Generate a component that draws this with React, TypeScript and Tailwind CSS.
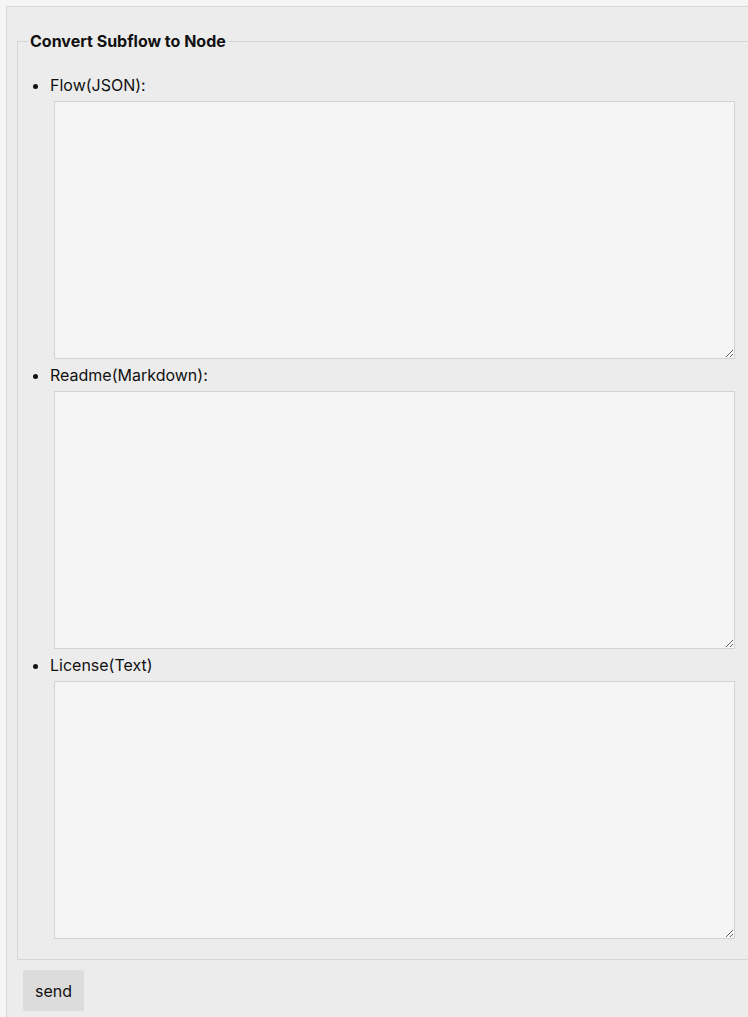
const fields = [
  { label: "Flow(JSON):", name: "flow" },
  { label: "Readme(Markdown):", name: "readme" },
  { label: "License(Text)", name: "license" },
];

export default function App() {
  return (
    <div className="h-[1017px] overflow-hidden bg-[#f5f5f5] pl-[6px] pt-[6px] font-['Inter',sans-serif] text-[16px] text-[#111]">
      <div className="w-[800px] h-[1100px] border border-[#d6d6d6] bg-[#ececec] pl-[10px] pt-[24px]">
        <fieldset className="w-[760px] border border-[#d6d6d6] px-[10px] pb-[20px]">
          <legend className="px-[2px] font-bold leading-[20px]">Convert Subflow to Node</legend>
          <ul className="list-disc pl-[22px] mt-[22px]">
            {fields.map((f, i) => (
              <li key={f.name} className={i > 0 ? "mt-[4px]" : ""}>
                <div className="leading-[20px]">{f.label}</div>
                <textarea
                  name={f.name}
                  className="block mt-[6px] ml-[4px] w-[681px] h-[258px] bg-[#f5f5f5] border border-[#d3d3d3] outline-none"
                />
              </li>
            ))}
          </ul>
        </fieldset>
        <button className="mt-[10px] ml-[6px] w-[61px] h-[41px] rounded-[2px] bg-[#dcdcdc] text-[16px] text-[#111]">
          send
        </button>
      </div>
    </div>
  );
}
